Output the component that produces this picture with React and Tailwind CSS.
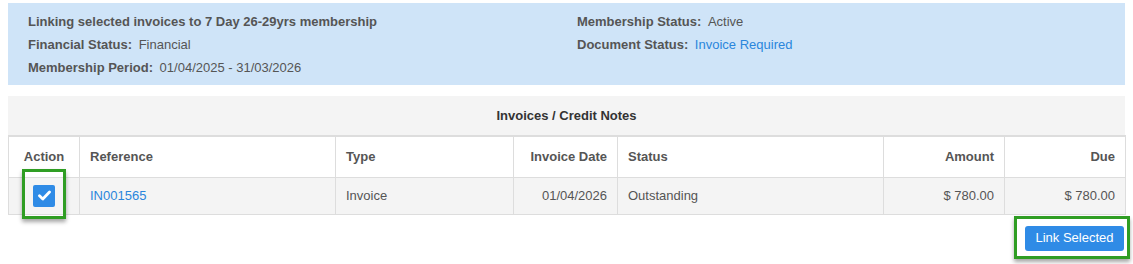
import React, { useState } from 'react';

const font = { fontFamily: '"Liberation Sans", Arial, sans-serif' };

function Field({ label, value, link }) {
  return (
    <div className="h-[23px] leading-[23px]">
      <span className="font-bold text-[#555]">{label}</span>{' '}
      <span className={`ml-[3px] ${link ? 'text-[#2a86dc]' : 'text-[#555]'}`}>{value}</span>
    </div>
  );
}

function App() {
  const [checked, setChecked] = useState(true);

  return (
    <div className="min-h-screen bg-white px-2 pt-[3px] text-[13px]" style={font}>
      {/* Membership summary */}
      <div className="grid grid-cols-[549px_1fr] bg-[#cfe4f8] pl-5 pt-[7px] pb-[6px]">
        <div>
          <div className="h-[23px] leading-[23px] font-bold text-[#555]">
            Linking selected invoices to 7 Day 26-29yrs membership
          </div>
          <Field label="Financial Status:" value="Financial" />
          <Field label="Membership Period:" value="01/04/2025 - 31/03/2026" />
        </div>
        <div>
          <Field label="Membership Status:" value="Active" />
          <Field label="Document Status:" value="Invoice Required" link />
        </div>
      </div>

      {/* Invoices table */}
      <div className="mt-[11px] w-[1117px]">
        <div className="h-[39px] bg-[#f4f4f4] text-center font-bold leading-[39px] text-[#333]">
          Invoices / Credit Notes
        </div>
        <table className="w-full table-fixed border-collapse border-t-2 border-[#ddd]">
          <colgroup>
            <col className="w-[71px]" />
            <col className="w-[256px]" />
            <col className="w-[178px]" />
            <col className="w-[104px]" />
            <col className="w-[266px]" />
            <col className="w-[121px]" />
            <col className="w-[121px]" />
          </colgroup>
          <thead>
            <tr className="h-[41px] bg-white font-bold text-[#555]">
              <th className="border border-[#ddd] text-center">Action</th>
              <th className="border border-[#ddd] px-[10px] text-left">Reference</th>
              <th className="border border-[#ddd] px-[10px] text-left">Type</th>
              <th className="border border-[#ddd] px-[10px] text-right">Invoice Date</th>
              <th className="border border-[#ddd] px-[10px] text-left">Status</th>
              <th className="border border-[#ddd] px-[10px] text-right">Amount</th>
              <th className="border border-[#ddd] px-[10px] text-right">Due</th>
            </tr>
          </thead>
          <tbody>
            <tr className="h-[37px] bg-[#f4f4f4] text-[#555]">
              <td className="border border-[#ddd] text-center">
                <div className="relative mx-auto h-[22px] w-[22px]">
                  <button
                    onClick={() => setChecked(!checked)}
                    className={`flex h-[22px] w-[22px] items-center justify-center rounded-[2px] ${
                      checked ? 'bg-[#2f8be6]' : 'bg-white border border-[#bbb]'
                    }`}
                  >
                    {checked && (
                      <svg width="13" height="11" viewBox="0 0 13 11">
                        <path d="M1.5 5.8 L4.8 9 L11.5 2" fill="none" stroke="white" strokeWidth="2.8" strokeLinecap="round" strokeLinejoin="round" />
                      </svg>
                    )}
                  </button>
                  <div className="pointer-events-none absolute -left-[11px] -top-[16px] -right-[11px] -bottom-[12px] border-[3px] border-[#2f9d23] shadow-[0_3px_4px_rgba(0,0,0,0.35)]" />
                </div>
              </td>
              <td className="border border-[#ddd] px-[10px] text-[#2a86dc]">IN001565</td>
              <td className="border border-[#ddd] px-[10px]">Invoice</td>
              <td className="border border-[#ddd] px-[10px] text-right">01/04/2026</td>
              <td className="border border-[#ddd] px-[10px]">Outstanding</td>
              <td className="border border-[#ddd] px-[10px] text-right">$ 780.00</td>
              <td className="border border-[#ddd] px-[10px] text-right">$ 780.00</td>
            </tr>
          </tbody>
        </table>
        <div className="flex justify-end pt-[11px] pr-px">
          <div className="relative">
            <button className="h-[25px] w-[99px] rounded-[3px] bg-[#2f8be6] text-[13px] text-white">
              Link Selected
            </button>
            <div className="pointer-events-none absolute -left-[11px] -top-[10px] -right-[6px] -bottom-[8px] border-[3px] border-[#2f9d23] shadow-[0_3px_4px_rgba(0,0,0,0.35)]" />
          </div>
        </div>
      </div>
    </div>
  );
}

export default App;
